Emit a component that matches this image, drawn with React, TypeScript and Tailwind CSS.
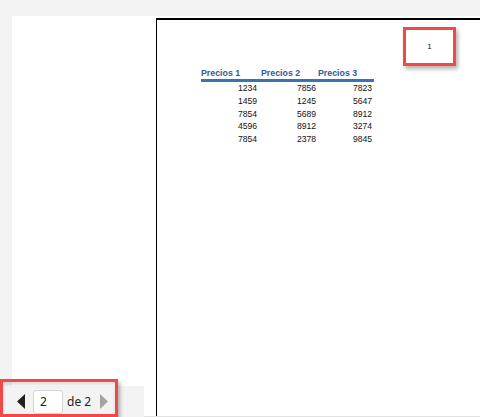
import React from "react";

const rows = [
  [1234, 7856, 7823],
  [1459, 1245, 5647],
  [7854, 5689, 8912],
  [4596, 8912, 3274],
  [7854, 2378, 9845],
];

function Pager() {
  return (
    <div className="flex items-center h-[31px] pl-[17px] font-['Noto_Sans',sans-serif] text-[12px] text-[#222]">
      <svg width="8" height="15" viewBox="0 0 8 15" className="mr-[8px]">
        <polygon points="8,0 0,7.5 8,15" fill="#1f1f1f" />
      </svg>
      <div className="w-[30px] h-[24px] bg-white border border-[#d4d4d4] rounded-[3px] flex items-center pl-[6px] text-[#1a1a1a]">
        2
      </div>
      <span className="ml-[4px]">de 2</span>
      <svg width="8" height="15" viewBox="0 0 8 15" className="ml-[9px]">
        <polygon points="0,0 8,7.5 0,15" fill="#a3a3a3" />
      </svg>
    </div>
  );
}

export default function App() {
  return (
    <div className="relative w-[480px] h-[417px] bg-[#f3f3f3] overflow-hidden flex pt-4">
      {/* left pane + pager */}
      <div className="w-[144px] flex flex-col">
        <div className="ml-3 h-[370px] bg-white" />
        <Pager />
      </div>

      {/* document preview */}
      <div className="flex-1 h-[401px] bg-white border-b border-[#e2e2e2] pl-3 pt-[2px] flex">
        <div className="flex-1 border-t-2 border-l border-black">
          <div className="ml-[44px] mt-[48px] w-[173px] font-['Liberation_Sans',Arial,sans-serif]">
            <div className="flex border-b-[3px] border-[#3a72b4] h-[14px] items-start text-[8.8px] font-bold text-[#2f5a9a] leading-[11px]">
              <div className="w-[58px]">Precios 1</div>
              <div className="w-[57px] pl-[2px]">Precios 2</div>
              <div className="w-[58px] pl-[2px]">Precios 3</div>
            </div>
            <div className="text-[8.6px] text-[#111]">
              {rows.map((r, i) => (
                <div key={i} className="flex h-[12.8px] items-center">
                  <div className="w-[58px] text-right pr-[2px]">{r[0]}</div>
                  <div className="w-[57px] text-right">{r[1]}</div>
                  <div className="w-[58px] text-right pr-[2px]">{r[2]}</div>
                </div>
              ))}
            </div>
          </div>
        </div>
      </div>

      {/* annotation boxes */}
      <div className="absolute left-[403px] top-[27px] w-[53px] h-[39px] border-[3px] border-[#f24848] shadow-[2px_3px_4px_rgba(0,0,0,0.3)] flex items-center justify-center font-['Liberation_Sans',Arial,sans-serif] text-[8px] text-[#111]">
        1
      </div>
      <div className="absolute left-0 top-[379px] w-[118px] h-[38px] border-[3px] border-[#f24848] shadow-[2px_3px_4px_rgba(0,0,0,0.3),inset_0_3px_3px_rgba(0,0,0,0.12)]" />
    </div>
  );
}
